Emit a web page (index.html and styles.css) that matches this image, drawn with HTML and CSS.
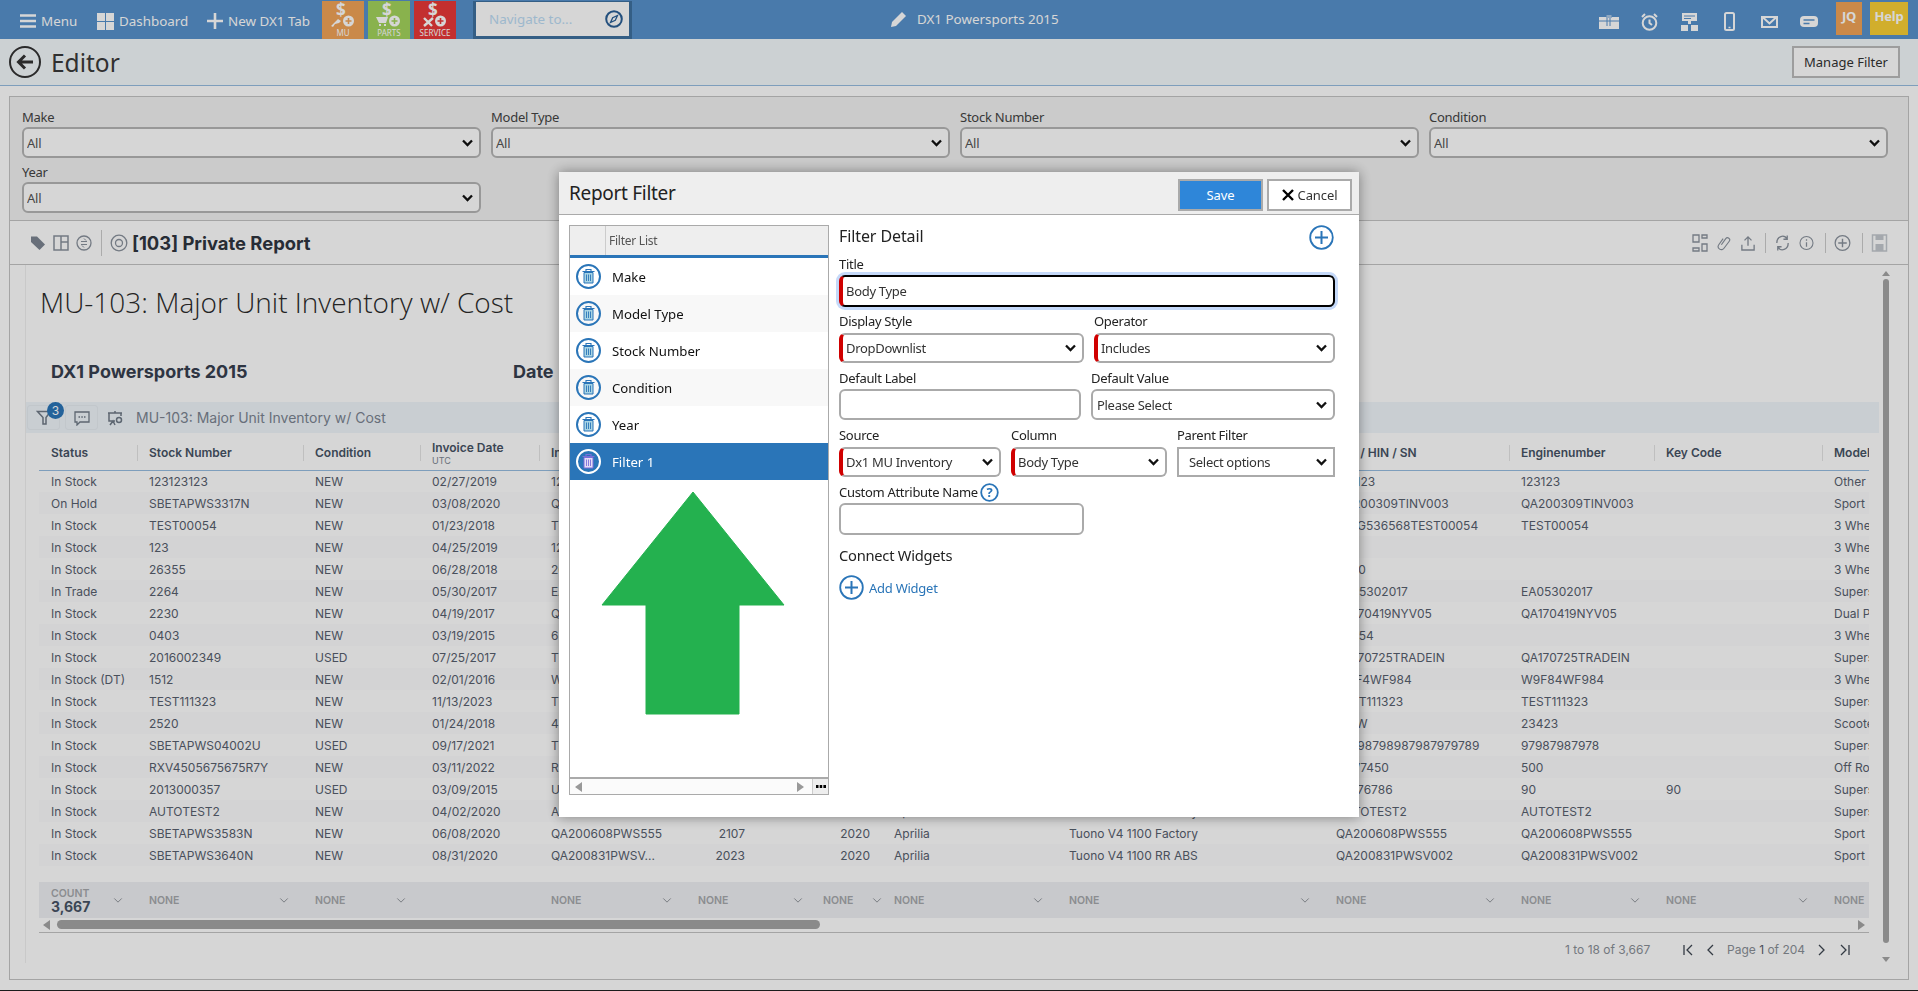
FILE: index.html
```html
<!DOCTYPE html>
<html lang="en">
<head>
<meta charset="utf-8">
<title>Editor</title>
<link rel="stylesheet" href="styles.css">
</head>
<body>
<svg class="sprite" width="0" height="0">
  <symbol id="trash" viewBox="0 0 21 21"><path d="M6 6.500h9V17H6z" fill="var(--trash, #a8d4e4)" stroke="currentColor" stroke-width="1"/><path d="M4.500 5.500h12M8 5V3.500h5V5" fill="none" stroke="currentColor" stroke-width="1.100"/><path d="M8.500 8.500V15M10.500 8.500V15M12.500 8.500V15" stroke="currentColor" stroke-width=".9"/></symbol>
  <symbol id="plusc" viewBox="0 0 25 25"><circle cx="12.500" cy="12.500" r="11.300" fill="none" stroke="currentColor" stroke-width="1.800"/><path d="M12.500 6v13M6 12.500h13" stroke="currentColor" stroke-width="2" fill="none"/></symbol>
  <symbol id="chev" viewBox="0 0 12 8"><path d="M1.500 1.500 6 6l4.500-4.500" fill="none" stroke="currentColor" stroke-width="1"/></symbol>
</svg>

<header class="topbar">
  <a class="tb-link tb-menu"><svg class="ic16" viewBox="0 0 16 16"><path d="M0 2.500h16M0 8h16M0 13.500h16" stroke="#fff" stroke-width="2.600"/></svg>Menu</a>
  <a class="tb-link tb-dash"><svg class="ic17" viewBox="0 0 17 17"><path d="M0 0h8v8H0zM9 0h8v8H9zM0 9h8v8H0zM9 9h8v8H9z" fill="#fff"/></svg>Dashboard</a>
  <a class="tb-link tb-new"><svg class="ic16" viewBox="0 0 16 16"><path d="M8 0v16M0 8h16" stroke="#fff" stroke-width="2.600"/></svg>New DX1 Tab</a>
  <a class="qbtn q-mu"><svg class="qicon" viewBox="0 0 30 26"><text x="8" y="15" class="qdollar">$</text><path d="M3 25l7-7 3 2-2 2-4 1-2 3z" fill="#fff"/><circle cx="20.500" cy="20" r="5.500" fill="#fff"/><path d="M20.500 17v6M17.500 20h6" stroke="#f1a457" stroke-width="1.600"/></svg><span>MU</span></a>
  <a class="qbtn q-parts"><svg class="qicon" viewBox="0 0 30 26"><text x="8" y="15" class="qdollar">$</text><path d="M2 16h12l-2 6H5zM5 23h2v2H5zM10 23h2v2h-2z" fill="#fff"/><circle cx="20.500" cy="20" r="5.500" fill="#fff"/><path d="M20.500 17v6M17.500 20h6" stroke="#a4d45c" stroke-width="1.600"/></svg><span>PARTS</span></a>
  <a class="qbtn q-service"><svg class="qicon" viewBox="0 0 30 26"><text x="8" y="15" class="qdollar">$</text><path d="M4 25l9-8M4 17l8 8" stroke="#fff" stroke-width="2.400"/><circle cx="20.500" cy="20" r="5.500" fill="#fff"/><path d="M20.500 17v6M17.500 20h6" stroke="#e93938" stroke-width="1.600"/></svg><span>SERVICE</span></a>
  <div class="navbox"><span class="nav-ph">Navigate to...</span><svg class="ic18" viewBox="0 0 18 18"><circle cx="9" cy="9" r="7.800" fill="none" stroke="#2a5f96" stroke-width="2"/><path d="M12.500 5.500 10.300 10.300 5.500 12.500 7.700 7.700z" fill="none" stroke="#2a5f96" stroke-width="1.300"/></svg></div>
  <div class="tb-center"><svg class="ic18" viewBox="0 0 18 18"><path d="M1 17l1-5L12 2l4 4L6 16z" fill="#fff"/></svg><span>DX1 Powersports 2015</span></div>
  <div class="tb-right">
    <svg class="tbi t1" viewBox="0 0 20 14"><path d="M0 2h20v12H0z" fill="#fff"/><path d="M7 0h6v2H7zM0 6h20M8 3v8M11 3v8" stroke="#5892cc" stroke-width="1" fill="#fff"/></svg>
    <svg class="tbi t2" viewBox="0 0 19 18"><circle cx="9.500" cy="10" r="6.800" fill="none" stroke="#fff" stroke-width="2"/><path d="M9.500 6.500V10l2.500 2M2 4l3-3M17 4l-3-3" stroke="#fff" stroke-width="2" fill="none"/></svg>
    <svg class="tbi t3" viewBox="0 0 19 18"><path d="M2 0h15v8H2zM8 8h3v3H8zM1 12h7v6H1zM11 12h7v6h-7z" fill="#fff"/><path d="M4 3h11M4 5.500h7" stroke="#5892cc"/></svg>
    <svg class="tbi t4" viewBox="0 0 11 19"><rect x="1" y="1" width="9" height="17" rx="1.500" fill="none" stroke="#fff" stroke-width="2"/><path d="M4.500 15.500h2" stroke="#fff" stroke-width="1.500"/></svg>
    <svg class="tbi t5" viewBox="0 0 17 12"><path d="M1 1h15v10H1z" fill="none" stroke="#fff" stroke-width="2"/><path d="M2 1.500l6.500 6 6.500-6" fill="none" stroke="#fff" stroke-width="2"/></svg>
    <svg class="tbi t6" viewBox="0 0 18 11"><rect width="18" height="11" rx="4" fill="#fff"/><path d="M3.500 4h11M3.500 7.500h6" stroke="#5892cc" stroke-width="1.500"/></svg>
    <a class="tb-user">JQ</a>
    <a class="tb-help">Help</a>
  </div>
</header>

<section class="pagehead">
  <svg class="back" viewBox="0 0 32 32"><circle cx="16" cy="16" r="15" fill="none" stroke="#333" stroke-width="2"/><path d="M24 16H10M16 9.500 9.500 16l6.500 6.500" fill="none" stroke="#333" stroke-width="3"/></svg>
  <h1 class="pagetitle">Editor</h1>
  <button class="btn-manage">Manage Filter</button>
</section>

<main class="panel">
  <section class="filters">
    <div class="f-field"><label>Make</label><select><option>All</option></select></div>
    <div class="f-field"><label>Model Type</label><select><option>All</option></select></div>
    <div class="f-field"><label>Stock Number</label><select><option>All</option></select></div>
    <div class="f-field"><label>Condition</label><select><option>All</option></select></div>
    <div class="f-field"><label>Year</label><select><option>All</option></select></div>
  </section>

  <section class="rtool">
    <svg class="ti ti-tag" viewBox="0 0 16 16"><path d="M1 1.500h6l8 8-5.500 5.500-8.500-8z" fill="#7c8592"/></svg>
    <svg class="ti" viewBox="0 0 16 16"><path d="M1 1h14v14H1zM8 1v14M8 7h7" fill="none" stroke="#8a929d" stroke-width="1.500"/></svg>
    <svg class="ti" viewBox="0 0 16 16"><circle cx="8" cy="8" r="7" fill="none" stroke="#8a929d" stroke-width="1.300"/><path d="M5 6.500h6M5 9.500h6M8 3.500 10 5.500M8 12.500 6 10.500" stroke="#8a929d" fill="none"/></svg>
    <i class="rsep"></i>
    <svg class="ti ti-eye" viewBox="0 0 18 18"><circle cx="9" cy="9" r="7.800" fill="none" stroke="#8a929d" stroke-width="1.300"/><circle cx="9" cy="9" r="3.500" fill="none" stroke="#8a929d" stroke-width="1.300"/></svg>
    <strong class="rtitle">[103] Private Report</strong>
    <div class="rtool-right">
      <svg class="ti tw20" viewBox="0 0 16 18"><path d="M1 1h6v7H1zM10 1h5v3h-5zM10 10h5v7h-5zM1 14h6v3H1z" fill="none" stroke="#8a929d" stroke-width="1.300"/></svg>
      <svg class="ti tw14" viewBox="0 0 16 18"><path d="M5 11l5-7a2.500 2.500 0 0 1 4 3L8 15a3.500 3.500 0 0 1-6-4l5-7" fill="none" stroke="#8a929d" stroke-width="1.300"/></svg>
      <svg class="ti tw14" viewBox="0 0 16 18"><path d="M8 12V2M4 6l4-4 4 4M1 11v6h14v-6" fill="none" stroke="#8a929d" stroke-width="1.500"/></svg>
      <i class="rsep2"></i>
      <svg class="ti tw17" viewBox="0 0 18 18"><path d="M3 9a6 7 0 0 1 11-4M15 9a6 7 0 0 1-11 4M14 1v4h-4M4 17v-4h4" fill="none" stroke="#8a929d" stroke-width="1.400"/></svg>
      <svg class="ti tw15" viewBox="0 0 18 18"><circle cx="9" cy="9" r="7.800" fill="none" stroke="#8a929d" stroke-width="1.300"/><path d="M9 8v5.500M9 4.500v1.800" stroke="#8a929d" stroke-width="1.500"/></svg>
      <i class="rsep2"></i>
      <svg class="ti tw17b" viewBox="0 0 18 18"><circle cx="9" cy="9" r="7.800" fill="none" stroke="#8a929d" stroke-width="1.300"/><path d="M9 4.500v9M4.500 9h9" stroke="#8a929d" stroke-width="1.500"/></svg>
      <i class="rsep2"></i>
      <svg class="ti ti-save" viewBox="0 0 16 18"><path d="M1 1h14v16H1z" fill="none" stroke="#c4c9ce" stroke-width="1.500"/><path d="M4 1h8v5H4zM4 10h8v7H4z" fill="#c4c9ce"/></svg>
    </div>
  </section>

  <section class="rbody">
    <div class="report">
      <h2 class="rheading">MU-103: Major Unit Inventory w/ Cost</h2>
      <div class="rinfo"><span class="rinfo-a">DX1 Powersports 2015</span><span class="rinfo-b">Date</span></div>
      <div class="wbar">
        <span class="wbtn wbtn-f"><svg class="wi" viewBox="0 0 16 16"><path d="M1.500 1.500h13L10 7.500V14H7V7.500z" fill="none" stroke="#6f7a87" stroke-width="1.500"/></svg><b class="badge">3</b></span>
        <span class="wbtn"><svg class="wi" viewBox="0 0 16 16"><path d="M1 2h14v10H6l-3 3v-3H1z" fill="none" stroke="#6f7a87" stroke-width="1.300"/><path d="M4.500 7h1.500M7.300 7h1.500M10 7h1.500" stroke="#6f7a87" stroke-width="1.300"/></svg></span>
        <svg class="wi wi-p" viewBox="0 0 16 16"><path d="M1 3h14M2 3v8h6M14 3v3M8 1v2M3 15l3-4 2 4" fill="none" stroke="#6f7a87" stroke-width="1.500"/><circle cx="12" cy="10" r="2.500" fill="none" stroke="#6f7a87" stroke-width="1.500"/></svg>
        <span class="wtitle">MU-103: Major Unit Inventory w/ Cost</span>
      </div>
      <table class="grid">
        <colgroup><col class="c1"><col class="c2"><col class="c3"><col class="c4"><col class="c5"><col class="c6"><col class="c7"><col class="c8"><col class="c9"><col class="c10"><col class="c11"><col class="c12"><col class="c13"><col class="c14"></colgroup>
        <thead><tr>
          <th>Status</th><th class="sep">Stock Number</th><th class="sep">Condition</th><th class="sep">Invoice Date<small>UTC</small></th><th class="sep">Invoice Number</th><th class="num">Cost</th><th></th><th class="num">Year</th><th>Make</th><th>Model</th><th>VIN / HIN / SN</th><th class="sep">Enginenumber</th><th class="sep">Key Code</th><th class="sep">Model Type</th>
        </tr></thead>
        <tbody>
          <tr><td>In Stock</td><td>123123123</td><td>NEW</td><td>02/27/2019</td><td>123123</td><td class="num">100</td><td></td><td class="num">2019</td><td>Other</td><td>Other</td><td>123123</td><td>123123</td><td></td><td>Other</td></tr>
          <tr><td>On Hold</td><td>SBETAPWS3317N</td><td>NEW</td><td>03/08/2020</td><td>QA200309TINV003</td><td class="num">100</td><td></td><td class="num">2020</td><td>Aprilia</td><td>Tuono</td><td>QA200309TINV003</td><td>QA200309TINV003</td><td></td><td>Sport</td></tr>
          <tr><td>In Stock</td><td>TEST00054</td><td>NEW</td><td>01/23/2018</td><td>TEST00054</td><td class="num">100</td><td></td><td class="num">2018</td><td>Can-Am</td><td>Spyder</td><td>12HG536568TEST00054</td><td>TEST00054</td><td></td><td>3 Wheel</td></tr>
          <tr><td>In Stock</td><td>123</td><td>NEW</td><td>04/25/2019</td><td>123</td><td class="num">100</td><td></td><td class="num">2019</td><td>Can-Am</td><td>Spyder</td><td></td><td></td><td></td><td>3 Wheel</td></tr>
          <tr><td>In Stock</td><td>26355</td><td>NEW</td><td>06/28/2018</td><td>26355</td><td class="num">100</td><td></td><td class="num">2018</td><td>Can-Am</td><td>Spyder</td><td>2630</td><td></td><td></td><td>3 Wheel</td></tr>
          <tr><td>In Trade</td><td>2264</td><td>NEW</td><td>05/30/2017</td><td>EA05302017</td><td class="num">100</td><td></td><td class="num">2017</td><td>Honda</td><td>CBR</td><td>EA05302017</td><td>EA05302017</td><td></td><td>Supersport</td></tr>
          <tr><td>In Stock</td><td>2230</td><td>NEW</td><td>04/19/2017</td><td>QA170419NYV05</td><td class="num">100</td><td></td><td class="num">2017</td><td>BMW</td><td>GS</td><td>QA170419NYV05</td><td>QA170419NYV05</td><td></td><td>Dual Purpose</td></tr>
          <tr><td>In Stock</td><td>0403</td><td>NEW</td><td>03/19/2015</td><td>6454</td><td class="num">100</td><td></td><td class="num">2015</td><td>Can-Am</td><td>Spyder</td><td>64654</td><td></td><td></td><td>3 Wheel</td></tr>
          <tr><td>In Stock</td><td>2016002349</td><td>USED</td><td>07/25/2017</td><td>TRADEIN</td><td class="num">100</td><td></td><td class="num">2016</td><td>Honda</td><td>CBR</td><td>QA170725TRADEIN</td><td>QA170725TRADEIN</td><td></td><td>Supersport</td></tr>
          <tr><td>In Stock (DT)</td><td>1512</td><td>NEW</td><td>02/01/2016</td><td>W9F84WF984</td><td class="num">100</td><td></td><td class="num">2016</td><td>Can-Am</td><td>Spyder</td><td>W9F4WF984</td><td>W9F84WF984</td><td></td><td>3 Wheel</td></tr>
          <tr><td>In Stock</td><td>TEST111323</td><td>NEW</td><td>11/13/2023</td><td>TEST111323</td><td class="num">100</td><td></td><td class="num">2023</td><td>Honda</td><td>CBR</td><td>TEST111323</td><td>TEST111323</td><td></td><td>Supersport</td></tr>
          <tr><td>In Stock</td><td>2520</td><td>NEW</td><td>01/24/2018</td><td>423423</td><td class="num">100</td><td></td><td class="num">2018</td><td>Vespa</td><td>GTS</td><td>AWW</td><td>23423</td><td></td><td>Scooter</td></tr>
          <tr><td>In Stock</td><td>SBETAPWS04002U</td><td>USED</td><td>09/17/2021</td><td>TRADE</td><td class="num">100</td><td></td><td class="num">2021</td><td>Aprilia</td><td>RSV4</td><td>99798798987987979789</td><td>97987987978</td><td></td><td>Supersport</td></tr>
          <tr><td>In Stock</td><td>RXV4505675675R7Y</td><td>NEW</td><td>03/11/2022</td><td>RXV450</td><td class="num">100</td><td></td><td class="num">2022</td><td>Aprilia</td><td>RXV</td><td>RXV7450</td><td>500</td><td></td><td>Off Road</td></tr>
          <tr><td>In Stock</td><td>2013000357</td><td>USED</td><td>03/09/2015</td><td>USED</td><td class="num">100</td><td></td><td class="num">2013</td><td>Honda</td><td>CBR</td><td>76776786</td><td>90</td><td>90</td><td>Supersport</td></tr>
          <tr><td>In Stock</td><td>AUTOTEST2</td><td>NEW</td><td>04/02/2020</td><td>AUTOTEST2</td><td class="num">100</td><td></td><td class="num">2020</td><td>Aprilia</td><td>Tuono V4 1100 Factory</td><td>AUTOTEST2</td><td>AUTOTEST2</td><td></td><td>Supersport</td></tr>
          <tr><td>In Stock</td><td>SBETAPWS3583N</td><td>NEW</td><td>06/08/2020</td><td>QA200608PWS555</td><td class="num">2107</td><td></td><td class="num">2020</td><td>Aprilia</td><td>Tuono V4 1100 Factory</td><td>QA200608PWS555</td><td>QA200608PWS555</td><td></td><td>Sport</td></tr>
          <tr><td>In Stock</td><td>SBETAPWS3640N</td><td>NEW</td><td>08/31/2020</td><td>QA200831PWSV...</td><td class="num">2023</td><td></td><td class="num">2020</td><td>Aprilia</td><td>Tuono V4 1100 RR ABS</td><td>QA200831PWSV002</td><td>QA200831PWSV002</td><td></td><td>Sport</td></tr>
        </tbody>
        <tfoot>
          <tr class="spacer"><td colspan="14"></td></tr>
          <tr class="totals">
            <td><div class="tot"><span class="cnt"><small>COUNT</small><b>3,667</b></span><svg class="cv" ><use href="#chev"/></svg></div></td>
            <td><div class="tot"><span>NONE</span><svg class="cv"><use href="#chev"/></svg></div></td>
            <td><div class="tot"><span>NONE</span><svg class="cv"><use href="#chev"/></svg></div></td>
            <td></td>
            <td><div class="tot"><span>NONE</span><svg class="cv"><use href="#chev"/></svg></div></td>
            <td colspan="2"><div class="tot tot-s"><span>NONE</span><svg class="cv"><use href="#chev"/></svg></div></td>
            <td class="t-year"><div class="tot"><span>NONE</span><svg class="cv"><use href="#chev"/></svg></div></td>
            <td><div class="tot"><span>NONE</span><svg class="cv"><use href="#chev"/></svg></div></td>
            <td><div class="tot"><span>NONE</span><svg class="cv"><use href="#chev"/></svg></div></td>
            <td><div class="tot"><span>NONE</span><svg class="cv"><use href="#chev"/></svg></div></td>
            <td><div class="tot"><span>NONE</span><svg class="cv"><use href="#chev"/></svg></div></td>
            <td><div class="tot"><span>NONE</span><svg class="cv"><use href="#chev"/></svg></div></td>
            <td><div class="tot"><span>NONE</span></div></td>
          </tr>
        </tfoot>
      </table>
      <div class="hscroll"><i class="arr-l"></i><div class="hthumb"></div><i class="arr-r"></i></div>
      <div class="pager">
        <span class="p-count">1 to 18 of 3,667</span>
        <svg class="pi p-first" viewBox="0 0 12 12"><path d="M2 1v10M10 1 5 6l5 5" fill="none" stroke="#3f4752" stroke-width="1.300"/></svg>
        <svg class="pi p-prev" viewBox="0 0 12 12"><path d="M8 1 3 6l5 5" fill="none" stroke="#3f4752" stroke-width="1.300"/></svg>
        <span class="p-page">Page <b>1</b> of 204</span>
        <svg class="pi p-next" viewBox="0 0 12 12"><path d="M4 1l5 5-5 5" fill="none" stroke="#3f4752" stroke-width="1.300"/></svg>
        <svg class="pi p-last" viewBox="0 0 12 12"><path d="M10 1v10M2 1l5 5-5 5" fill="none" stroke="#3f4752" stroke-width="1.300"/></svg>
      </div>
    </div>
    <div class="vscroll"><i class="v-up"></i><div class="vthumb"></div><i class="v-down"></i></div>
  </section>
</main>
<div class="pagefoot"></div>

<div class="scrim"></div>
<aside class="modal">
  <header class="m-head">
    <h3 class="m-title">Report Filter</h3>
    <button class="btn-save">Save</button>
    <button class="btn-cancel"><svg class="x" viewBox="0 0 12 12"><path d="M1 1l10 10M11 1 1 11" stroke="#000" stroke-width="2.400"/></svg>Cancel</button>
  </header>
  <div class="m-body">
    <div class="flist">
      <div class="fl-head"><span class="fl-blank"></span><span class="fl-cap">Filter List</span></div>
      <div class="fl-rows">
        <div class="fl-row"><span class="tc"><svg><use href="#trash"/></svg></span>Make</div>
        <div class="fl-row alt"><span class="tc"><svg><use href="#trash"/></svg></span>Model Type</div>
        <div class="fl-row"><span class="tc"><svg><use href="#trash"/></svg></span>Stock Number</div>
        <div class="fl-row alt"><span class="tc"><svg><use href="#trash"/></svg></span>Condition</div>
        <div class="fl-row"><span class="tc"><svg><use href="#trash"/></svg></span>Year</div>
        <div class="fl-row sel"><span class="tc"><svg><use href="#trash"/></svg></span>Filter 1</div>
        <svg class="arrow" viewBox="0 0 184 224"><path d="M92 1 183 114H138V223H45V114H1z" fill="#24b14f" stroke="#24b14f" stroke-width="1" stroke-linejoin="round"/></svg>
      </div>
      <div class="fl-foot"><div class="fl-track"><i class="fa-l"></i><i class="fa-r"></i></div><span class="fl-more"><svg class="dots" viewBox="0 0 10 3"><path d="M0 0h2.500v3H0zM3.700 0h2.500v3H3.700zM7.400 0h2.600v3H7.400z" fill="#000"/></svg></span></div>
    </div>
    <form class="detail">
      <div class="d-head"><h4>Filter Detail</h4><svg class="pc"><use href="#plusc"/></svg></div>
      <div class="row r1"><div class="fld"><label>Title</label><input class="req focus" value="Body Type"></div></div>
      <div class="row r2"><div class="fld"><label>Display Style</label><select class="req"><option>DropDownlist</option></select></div><div class="fld"><label>Operator</label><select class="req"><option>Includes</option></select></div></div>
      <div class="row r3"><div class="fld"><label>Default Label</label><input></div><div class="fld"><label>Default Value</label><select><option>Please Select</option></select></div></div>
      <div class="row r4"><div class="fld"><label>Source</label><select class="req"><option>Dx1 MU Inventory</option></select></div><div class="fld"><label>Column</label><select class="req"><option>Body Type</option></select></div><div class="fld"><label>Parent Filter</label><select class="square"><option>Select options</option></select></div></div>
      <div class="row r5"><div class="fld"><label>Custom Attribute Name <svg class="help" viewBox="0 0 19 19"><circle cx="9.500" cy="9.500" r="8.300" fill="none" stroke="#2a75b8" stroke-width="1.800"/><text x="9.500" y="14" class="help-t">?</text></svg></label><input></div></div>
      <h4 class="cw">Connect Widgets</h4>
      <a class="addw"><svg class="pc"><use href="#plusc"/></svg><span>Add Widget</span></a>
    </form>
  </div>
</aside>
</body>
</html>
```
FILE: styles.css
```css
* { box-sizing: border-box; }
html, body { margin: 0; padding: 0; }
body { width: 1918px; height: 991px; overflow: hidden; background: #fff; color: #333; font-family: "Noto Sans", "Open Sans", sans-serif; font-size: 13px; letter-spacing: -.25px; }
h1, h2, h3, h4 { margin: 0; font-weight: 400; }
.sprite { position: absolute; }
svg { display: block; flex: none; }
select { appearance: none; background-image: url("data:image/svg+xml,%3Csvg xmlns='http://www.w3.org/2000/svg' viewBox='0 0 11 8'%3E%3Cpath d='M1 1.500 5.500 6 10 1.500' fill='none' stroke='%23111' stroke-width='2.300'/%3E%3C/svg%3E"); background-repeat: no-repeat; background-position: right 6px center; background-size: 11px 8px; }

/* top bar */
.topbar { height: 39px; background: #5892cc; display: flex; align-items: stretch; color: #fff; }
.tb-link { display: flex; align-items: center; gap: 5px; font-size: 13.400px; letter-spacing: 0; padding-top: 3px; }
.tb-menu { margin-left: 20px; width: 77px; }
.tb-dash { width: 110px; }
.tb-new { width: 115px; }
.ic16 { width: 16px; height: 16px; }
.ic17 { width: 17px; height: 17px; }
.ic18 { width: 18px; height: 18px; }
.qbtn { width: 42px; margin: 1px 4px 0 0; display: flex; flex-direction: column; align-items: center; font-size: 8px; letter-spacing: 0; line-height: 10px; color: #fff; }
.qicon { width: 30px; height: 26px; margin-bottom: 1px; overflow: visible; }
.qdollar { font: 700 17px "Noto Sans", sans-serif; fill: #fff; }
.q-mu { background: #f1a457; }
.q-parts { background: #a4d45c; }
.q-service { background: #e93938; }
.navbox { margin: 1px 0 0 13px; width: 159px; background: #fff; border: 3px solid #3f719f; border-width: 1px 3px 3px; display: flex; align-items: center; justify-content: space-between; padding: 0 6px 0 13px; }
.nav-ph { color: #bcdcf5; font-size: 13.400px; letter-spacing: 0; }
.tb-center { margin-left: 258px; display: flex; align-items: center; gap: 9px; font-size: 13.400px; letter-spacing: 0; padding-bottom: 1px; }
.tb-right { margin-left: auto; display: flex; align-items: center; }
.tbi { display: block; margin-top: 4px; }
.t1 { width: 20px; height: 14px; margin-right: 21px; }
.t2 { width: 19px; height: 18px; margin-right: 21px; }
.t3 { width: 19px; height: 18px; margin-right: 25px; }
.t4 { width: 11px; height: 19px; margin-right: 26px; }
.t5 { width: 17px; height: 12px; margin-right: 22px; }
.t6 { width: 18px; height: 11px; margin-right: 18px; }
.tb-user, .tb-help { align-self: flex-start; margin-top: 2px; height: 33px; display: flex; align-items: center; justify-content: center; font-weight: 700; background: #f1a457; color: #fff; font-size: 13px; }
.tb-user { width: 26px; padding-bottom: 6px; }
.tb-help { width: 38px; margin: 2px 10px 0 8px; background: #fad035; padding-bottom: 6px; }

/* page head */
.pagehead { height: 47px; background: #f4f9fc; border-bottom: 1px solid #97bde0; display: flex; align-items: center; padding: 0 18px 0 9px; }
.back { width: 32px; height: 32px; }
.pagetitle { margin-left: 10px; font-size: 24.500px; color: #3a3a3a; letter-spacing: 0; }
.btn-manage { margin-left: auto; width: 108px; height: 32px; background: #fff; border: 2px solid #bbb; font: 13px "Noto Sans", sans-serif; letter-spacing: 0; color: #333; padding: 0; }

/* panel */
.panel { margin: 10px 9px 0; height: 884px; border: 1px solid #c4c4c4; display: flex; flex-direction: column; }
.filters { height: 124px; flex: none; background: #f2f2f2; border-bottom: 1px solid #c4c4c4; padding: 11px 20px 0 12px; display: grid; grid-template-columns: repeat(4, 1fr); column-gap: 10px; row-gap: 5px; align-content: start; }
.f-field label { display: block; height: 18px; line-height: 18px; font-size: 13px; color: #444; margin-bottom: 1px; }
.f-field select { display: block; width: 100%; height: 31px; background-color: #fff; border: 2px solid #b5b5b5; border-radius: 6px; font: 13px "Noto Sans", sans-serif; letter-spacing: -.25px; color: #555; padding-left: 3px; }
.rtool { height: 44px; border-bottom: 1px solid #c4c4c4; display: flex; align-items: center; padding: 0 20px; flex: none; }
.ti { width: 16px; height: 16px; margin-right: 7px; }
.ti-tag { margin-right: 7px; }
.ti-eye { width: 18px; height: 18px; margin-right: 4px; }
.rsep { width: 1px; height: 26px; background: #ccc; margin: 0 8px 0 2px; }
.rsep2 { width: 1px; height: 20px; background: #ccc; margin: 0 8px 0 0; }
.rtitle { font: 700 18.400px "Inter", sans-serif; letter-spacing: 0; color: #2f3540; }
.rtool-right { margin-left: auto; display: flex; align-items: center; }
.rtool-right .ti { height: 18px; }
.rtool-right .tw20 { width: 20px; margin-right: 7px; }
.rtool-right .tw14 { width: 14px; margin-right: 10px; }
.rtool-right .tw17 { width: 17px; margin-right: 8px; }
.rtool-right .tw15 { width: 15px; margin-right: 11px; }
.rtool-right .tw17b { width: 17px; margin-right: 11px; }
.rtool-right .ti-save { width: 17px; margin-right: 0; }

.rbody { flex: 1; display: flex; min-height: 0; }
.report { margin-left: 15px; flex: 1; min-width: 0; border-left: 1px solid #f0f0f0; height: 698px; }
.rheading { margin: 17px 0 0 14px; height: 40px; font: 300 28px/40px "Open Sans", sans-serif; letter-spacing: 0; color: #2c2c2c; }
.rinfo { margin-top: 34px; height: 32px; display: flex; font: 700 18px/32px "Inter", sans-serif; letter-spacing: 0; color: #37404f; padding-left: 25px; }
.rinfo-a { width: 462px; }
.wbar { margin-top: 14px; height: 31px; background: #f0f6fb; display: flex; align-items: center; padding-left: 1px; font-family: "Inter", sans-serif; letter-spacing: 0; }
.wbtn { width: 33px; height: 25px; border: 1px solid #e7edf2; border-radius: 3px; margin-right: 5px; display: flex; align-items: center; justify-content: center; position: relative; }
.wi { width: 16px; height: 16px; }
.wi-p { margin-left: 4px; }
.badge { position: absolute; top: -4px; right: -5px; width: 17px; height: 17px; border-radius: 50%; background: #2a75b8; color: #fff; font: 400 12px/17px "Inter", sans-serif; text-align: center; }
.wtitle { margin-left: 13px; font-size: 14px; color: #7c8592; }

/* table */
.grid { margin-left: 13px; width: 1830px; table-layout: fixed; border-collapse: collapse; font-family: "Inter", sans-serif; font-size: 12px; letter-spacing: 0; color: #57606e; }
.c1 { width: 98px; } .c2 { width: 166px; } .c3 { width: 117px; } .c4 { width: 119px; } .c5 { width: 147px; } .c6 { width: 71px; } .c7 { width: 54px; } .c8 { width: 71px; } .c9 { width: 175px; } .c10 { width: 267px; } .c11 { width: 185px; } .c12 { width: 145px; } .c13 { width: 168px; } .c14 { width: 47px; }
.grid th { height: 37px; padding: 4px 0 0 12px; text-align: left; font-weight: 600; font-size: 12px; color: #475365; border-bottom: 1px solid #97bde0; white-space: nowrap; overflow: hidden; line-height: 14px; }
.grid th small { display: block; margin-top: 1px; font-size: 9px; font-weight: 400; line-height: 10px; color: #7c8592; }
.grid th.sep { background: linear-gradient(#e4e4e4, #e4e4e4) left 12px / 1px 16px no-repeat; }
.grid td { height: 22px; padding: 0 0 0 12px; white-space: nowrap; overflow: hidden; }
.grid tbody tr:nth-child(even) td { background: #fcfcfd; }
.grid th.num, .grid td.num { text-align: right; padding: 0 12px 0 0; }
.spacer td { height: 16px; }
.grid .totals td { height: 36px; background: #eff0f3; overflow: hidden; padding: 0 0 0 12px; }
.tot { display: flex; align-items: center; justify-content: space-between; padding-right: 14px; font-size: 10.500px; font-weight: 600; color: #a6a8ac; letter-spacing: 0; }
.tot-s { padding-right: 8px; }
.t-year .tot { padding-right: 0; }
.cnt { display: block; line-height: 11px; padding-top: 3px; }
.cnt small { display: block; font-size: 10.500px; }
.cnt b { display: block; font-size: 14px; line-height: 16px; font-weight: 700; color: #475365; }
.cv { width: 10px; height: 7px; color: #7e848c; }

.hscroll { margin-left: 13px; width: 1830px; height: 15px; border-bottom: 1px solid #c4c4c4; display: flex; align-items: center; padding-bottom: 1px; }
.arr-l { width: 0; height: 0; border: 5px solid transparent; border-left: 0; border-right: 7px solid #a5a5a5; margin: 0 7px 0 4px; }
.hthumb { width: 763px; height: 9px; border-radius: 5px; background: #a5a5a5; }
.arr-r { width: 0; height: 0; border: 5px solid transparent; border-right: 0; border-left: 7px solid #a5a5a5; margin-left: auto; margin-right: 4px; }
.pager { margin-left: 13px; width: 1830px; height: 30px; display: flex; align-items: center; font-family: "Inter", sans-serif; font-size: 12px; letter-spacing: 0; color: #8a8f97; padding-top: 3px; padding-left: 1526px; white-space: nowrap; }
.pi { width: 12px; height: 12px; }
.p-count { width: 117px; }
.p-prev { margin-left: 11px; }
.p-page { margin-left: 10px; width: 78px; }
.p-page b { font-weight: 400; color: #57606e; }
.p-next { margin-left: 10px; }
.p-last { margin-left: 12px; }

.vscroll { width: 14px; margin-right: 15px; height: 698px; display: flex; flex-direction: column; align-items: center; padding-top: 6px; }
.v-up { width: 0; height: 0; border: 4px solid transparent; border-top: 0; border-bottom: 5px solid #a5a5a5; }
.vthumb { width: 6px; height: 664px; background: #a5a5a5; border-radius: 3px; margin-top: 3px; }
.v-down { width: 0; height: 0; border: 4px solid transparent; border-bottom: 0; border-top: 5px solid #a5a5a5; margin-top: 14px; }

.pagefoot { margin-top: 10px; height: 1px; background: #222; }

/* modal */
.scrim { position: fixed; inset: 0; background: rgba(0, 0, 0, .16); }
.modal { position: fixed; left: 559px; top: 172px; width: 800px; height: 645px; background: #fff; box-shadow: 0 0 12px rgba(0, 0, 0, .4); color: #111; }
.m-head { height: 43px; background: #eee; border-bottom: 1px solid #aaa; display: flex; align-items: center; padding: 0 7px 0 10px; }
.m-title { font-size: 19px; flex: 1; letter-spacing: -.3px; color: #222; }
.btn-save, .btn-cancel { height: 32px; width: 85px; margin-top: 4px; border: 2px solid #aaa; font: 13px "Noto Sans", sans-serif; letter-spacing: -.1px; padding: 0; display: flex; align-items: center; justify-content: center; }
.btn-save { background: #2e86d9; color: #fff; margin-right: 4px; }
.btn-cancel { background: #fff; color: #333; gap: 4px; }
.x { width: 12px; height: 12px; }
.m-body { display: flex; padding: 10px 0 0 10px; }
.flist { width: 260px; height: 570px; border: 1px solid #aaa; display: flex; flex-direction: column; }
.fl-head { height: 32px; display: flex; background: #eee; border-bottom: 3px solid #2a75b8; flex: none; }
.fl-blank { width: 36px; border-right: 1px solid #ccc; }
.fl-cap { padding-left: 3px; line-height: 30px; font-size: 12px; color: #555; }
.fl-rows { flex: 1; min-height: 0; position: relative; }
.fl-row { height: 37px; display: flex; align-items: center; font-size: 13.200px; letter-spacing: 0; color: #111; }
.fl-row.alt { background: #f8f8f8; }
.fl-row.sel { background: #2a75b8; color: #fff; }
.tc { width: 25px; height: 25px; margin: 0 11px 0 6px; border-radius: 50%; border: 2px solid #2a75b8; color: #2a75b8; }
.tc svg { width: 21px; height: 21px; }
.sel .tc { border-color: #fff; color: #7a6fd8; --trash: #e6dcf5; }
.arrow { position: absolute; left: 31px; top: 233px; width: 184px; height: 224px; }
.fl-foot { height: 17px; display: flex; border-top: 2px solid #aaa; flex: none; }
.fl-track { flex: 1; background: #fbfbfb; display: flex; align-items: center; justify-content: space-between; padding: 0 8px 0 5px; }
.fa-l { width: 0; height: 0; border: 5px solid transparent; border-left: 0; border-right: 7px solid #999; }
.fa-r { width: 0; height: 0; border: 5px solid transparent; border-right: 0; border-left: 7px solid #999; }
.fl-more { width: 16px; border-left: 1px solid #ccc; background: #eee; display: flex; align-items: center; justify-content: center; }
.dots { width: 10px; height: 3px; }

.detail { margin-left: 10px; width: 496px; }
.d-head { height: 25px; display: flex; justify-content: space-between; align-items: center; padding-right: 1px; }
.d-head h4 { font-size: 16px; color: #222; margin-top: -3px; letter-spacing: -.1px; }
.pc { width: 25px; height: 25px; color: #2a75b8; }
.row { display: grid; }
.r1 { margin-top: 5px; grid-template-columns: 496px; }
.r2 { margin-top: 5px; grid-template-columns: 245px 241px; column-gap: 10px; }
.r3 { margin-top: 6px; grid-template-columns: 242px 244px; column-gap: 10px; }
.r4 { margin-top: 6px; grid-template-columns: 162px 156px 158px; column-gap: 10px; }
.r5 { margin-top: 6px; grid-template-columns: 245px; }
.fld label { display: flex; align-items: center; gap: 2px; height: 18px; line-height: 18px; font-size: 13px; color: #222; margin-bottom: 2px; white-space: nowrap; letter-spacing: -.3px; }
.r2 label { margin-bottom: 3px; }
.r4 label { margin-bottom: 3px; }
.fld input, .fld select { display: block; width: 100%; height: 31px; background-color: #fff; border: 2px solid #aaa; border-radius: 6px; font: 13px "Noto Sans", sans-serif; letter-spacing: -.3px; color: #333; padding: 0 0 0 4px; outline: 0; }
.r1 input, .r5 input { height: 32px; }
.r2 select, .r4 select { height: 30px; }
.fld .req { border-left: 4px solid #d00000; padding-left: 3px; }
.fld .focus { border-color: #000; border-left-color: #d00000; box-shadow: 0 0 0 3px #c5d9f9; }
.fld .square { border-radius: 0; padding-left: 10px; }
.help { width: 19px; height: 19px; }
.help-t { font: 700 13px "Noto Sans", sans-serif; fill: #2a75b8; text-anchor: middle; }
.cw { margin-top: 10px; font-size: 14.700px; line-height: 20px; color: #222; }
.addw { margin-top: 10px; display: flex; align-items: center; gap: 5px; color: #2a75b8; font-size: 13px; }
```
